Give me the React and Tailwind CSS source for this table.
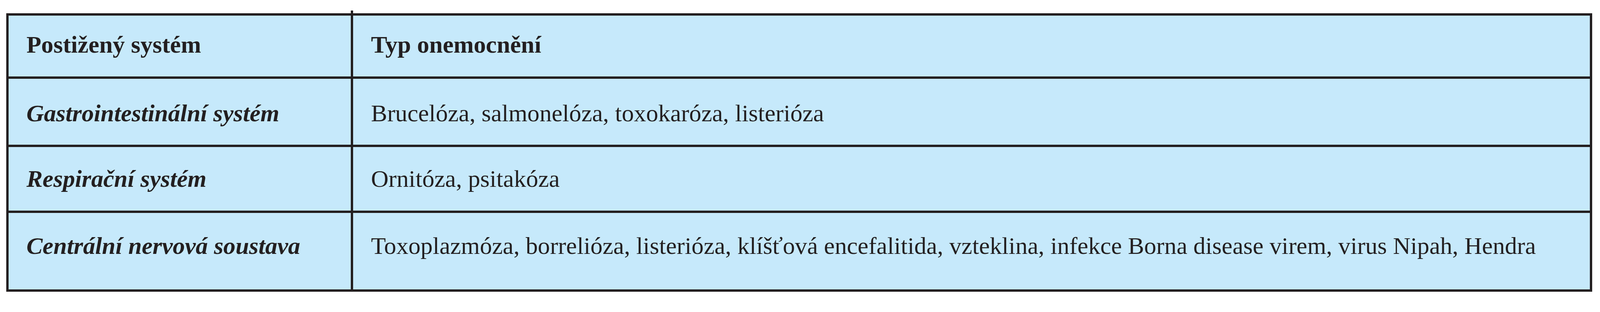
const rows = [
  {
    system: 'Gastrointestinální systém',
    disease: 'Brucelóza, salmonelóza, toxokaróza, listerióza',
    height: 'h-[175px]',
    shift: 'pt-[7px]',
  },
  {
    system: 'Respirační systém',
    disease: 'Ornitóza, psitakóza',
    height: 'h-[169px]',
    shift: '',
  },
  {
    system: 'Centrální nervová soustava',
    disease:
      'Toxoplazmóza, borrelióza, listerióza, klíšťová encefalitida, vzteklina, infekce Borna disease virem, virus Nipah, Hendra',
    height: 'h-[196px]',
    shift: 'pb-[27px]',
  },
];

export default function App() {
  return (
    <div className="h-[800px] bg-white pt-[34px] pr-[0.478vw] pl-[0.38vw] font-['Liberation_Serif','Times_New_Roman',serif] text-[1.518vw] leading-none text-[#231f20]">
      <div className="border-[6px] border-[#231f20] bg-[#c6e9fb]">
        {/* Header */}
        <div className="flex h-[162px] border-b-[6px] border-[#231f20]">
          <div className="relative flex w-[21.55vw] shrink-0 items-center border-r-[6px] border-[#231f20] pb-[7px] pl-[1.125vw] font-bold whitespace-nowrap">
            <span className="absolute -top-[13px] -right-[6px] h-[7px] w-[6px] bg-[#231f20]" />
            Postižený systém
          </div>
          <div className="flex min-w-0 flex-1 items-center pb-[7px] pl-[1.11vw] font-bold whitespace-nowrap">
            Typ onemocnění
          </div>
        </div>

        {rows.map((row, i) => (
          <div
            key={row.system}
            className={`flex ${row.height} ${i < rows.length - 1 ? 'border-b-[6px] border-[#231f20]' : ''}`}
          >
            <div className={`flex w-[21.55vw] shrink-0 items-center border-r-[6px] border-[#231f20] ${row.shift} pl-[1.125vw] font-bold italic whitespace-nowrap`}>
              {row.system}
            </div>
            <div className={`flex min-w-0 flex-1 items-center ${row.shift} pl-[1.11vw] whitespace-nowrap`}>
              {row.disease}
            </div>
          </div>
        ))}
      </div>
    </div>
  );
}
